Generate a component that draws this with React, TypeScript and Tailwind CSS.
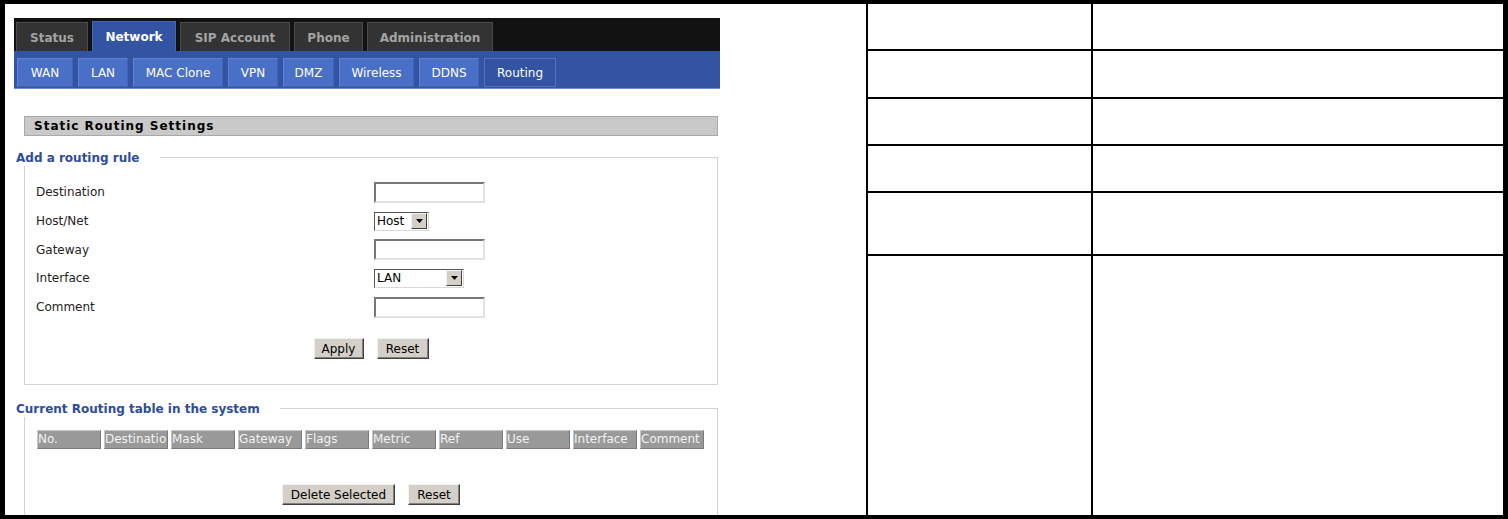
import React from 'react';

const topTabs = [
  { label: 'Status', cls: 'w-[72px] h-[29px] bg-[#333333] text-[#a3a3a3] border-[#4a4a4a]' },
  { label: 'Network', cls: 'w-[84px] h-[30px] bg-[#3354a2] text-white border-[#4466b4]' },
  { label: 'SIP Account', cls: 'w-[110px] h-[29px] bg-[#333333] text-[#a3a3a3] border-[#4a4a4a]' },
  { label: 'Phone', cls: 'w-[69px] h-[29px] bg-[#333333] text-[#a3a3a3] border-[#4a4a4a]' },
  { label: 'Administration', cls: 'w-[126px] h-[29px] bg-[#333333] text-[#a3a3a3] border-[#4a4a4a]' },
];

const subTabs = [
  { label: 'WAN', w: 'w-[56px]' },
  { label: 'LAN', w: 'w-[50px]' },
  { label: 'MAC Clone', w: 'w-[90px]' },
  { label: 'VPN', w: 'w-[50px]' },
  { label: 'DMZ', w: 'w-[51px]' },
  { label: 'Wireless', w: 'w-[75px]' },
  { label: 'DDNS', w: 'w-[60px]' },
  { label: 'Routing', w: 'w-[72px]', active: true },
];

const columns = ['No.', 'Destination', 'Mask', 'Gateway', 'Flags', 'Metric', 'Ref', 'Use', 'Interface', 'Comment'];

function TextBox() {
  return (
    <div className="w-[111px] h-[21px] bg-white border-2 border-t-[#777777] border-l-[#777777] border-r-[#e2e2e2] border-b-[#e2e2e2]" />
  );
}

function SelectBox({ value, w }: { value: string; w: string }) {
  return (
    <div className={`${w} h-[19px] bg-white border border-t-[#555555] border-l-[#555555] border-r-[#d8d8d8] border-b-[#d8d8d8] flex items-center justify-between`}>
      <span className="pl-[2px] text-[12px] text-black leading-none">{value}</span>
      <div className="w-[16px] h-[16px] mr-[1px] bg-[#d4d0c8] border border-t-[#f4f4f4] border-l-[#f4f4f4] border-r-[#404040] border-b-[#404040] flex items-center justify-center">
        <svg width="7" height="4" viewBox="0 0 7 4">
          <polygon points="0,0 7,0 3.5,4" fill="#000" />
        </svg>
      </div>
    </div>
  );
}

function Button({ label, w }: { label: string; w: string }) {
  return (
    <div className={`${w} h-[21px] bg-[#d4d0c8] border border-t-[#f2f2f2] border-l-[#f2f2f2] border-r-[#404040] border-b-[#404040] shadow-[inset_-1px_-1px_0_#808080] flex items-center justify-center text-[12px] text-black`}>
      {label}
    </div>
  );
}

function Legend({ text }: { text: string }) {
  return (
    <div className="absolute left-[-9px] top-[-9px] bg-white pr-[20px] h-[17px] flex items-center text-[12px] font-bold text-[#2d4c9c]">
      {text}
    </div>
  );
}

const fields = [
  { label: 'Destination', control: <TextBox /> },
  { label: 'Host/Net', control: <SelectBox value="Host" w="w-[55px]" /> },
  { label: 'Gateway', control: <TextBox /> },
  { label: 'Interface', control: <SelectBox value="LAN" w="w-[90px]" /> },
  { label: 'Comment', control: <TextBox /> },
];

export default function App() {
  return (
    <div className="w-[1508px] h-[519px] bg-black pt-[4px] pl-[5px] pr-[5px] pb-[4px] flex overflow-hidden font-['DejaVu_Sans',sans-serif]">
      {/* left: router web page */}
      <div className="w-[715px] h-full bg-white overflow-hidden pl-[9px] pt-[14px]">
        <div className="w-[706px]">
          <div className="h-[33px] bg-[#121212] flex items-end pl-[2px] gap-[4px]">
            {topTabs.map((t) => (
              <div
                key={t.label}
                className={`${t.cls} border border-b-0 flex items-center justify-center pt-[1px] text-[12px] font-bold`}
              >
                {t.label}
              </div>
            ))}
          </div>
          <div className="h-[38px] bg-[#3354a2] border-b border-[#6f8ad0] flex items-start pt-[7px] pl-[3px] gap-[5px]">
            {subTabs.map((t) => (
              <div
                key={t.label}
                className={`${t.w} h-[29px] border flex items-center justify-center pt-[1px] text-[12px] text-white ${
                  t.active
                    ? 'bg-[#3354a2] border-[#4f72c8]'
                    : 'bg-[#4a6fc6] border-t-[#5d82d6] border-l-[#5d82d6] border-r-[#4064b8] border-b-[#4064b8]'
                }`}
              >
                {t.label}
              </div>
            ))}
          </div>
        </div>

        <div className="ml-[10px] w-[694px] mt-[27px]">
          <div className="h-[20px] bg-[#c9c9c9] border border-[#a9a9a9] flex items-center pl-[9px] text-[12px] font-bold tracking-[1px] text-black">
            Static Routing Settings
          </div>

          <div className="relative mt-[21px] w-[694px] border border-[#d2d2d2] pt-[20px] pb-[25px]">
            <Legend text="Add a routing rule" />
            {fields.map((f) => (
              <div key={f.label} className="h-[28.7px] flex items-center pl-[11px]">
                <div className="w-[338px] text-[12px] text-[#222222]">{f.label}</div>
                {f.control}
              </div>
            ))}
            <div className="mt-[17px] flex justify-center gap-[13px]">
              <Button label="Apply" w="w-[50px]" />
              <Button label="Reset" w="w-[52px]" />
            </div>
          </div>

          <div className="relative mt-[23px] w-[694px] border border-[#d2d2d2] pt-[21px] pb-[30px]">
            <Legend text="Current Routing table in the system" />
            <div className="pl-[12px] flex gap-[3px]">
              {columns.map((c) => (
                <div
                  key={c}
                  className="w-[64px] h-[19px] bg-[#999999] border border-t-[#c6c6c6] border-l-[#c6c6c6] border-r-[#7a7a7a] border-b-[#7a7a7a] overflow-hidden whitespace-nowrap text-[12px] leading-[17px] text-[#f2f2f2]"
                >
                  {c}
                </div>
              ))}
            </div>
            <div className="mt-[35px] flex justify-center gap-[13px]">
              <Button label="Delete Selected" w="w-[113px]" />
              <Button label="Reset" w="w-[52px]" />
            </div>
          </div>
        </div>
      </div>

      {/* right: empty document table */}
      <div className="flex-1 h-full bg-white pl-[146px] flex">
        <div className="flex-1 border-l-2 border-black flex flex-col">
          {['h-[47px]', 'h-[48px]', 'h-[47px]', 'h-[47px]', 'h-[63px]'].map((h, i) => (
            <div key={i} className={`${h} flex border-b-2 border-black`}>
              <div className="w-[225px] border-r-2 border-black" />
              <div className="flex-1" />
            </div>
          ))}
          <div className="flex-1 flex">
            <div className="w-[225px] border-r-2 border-black" />
            <div className="flex-1" />
          </div>
        </div>
      </div>
    </div>
  );
}
